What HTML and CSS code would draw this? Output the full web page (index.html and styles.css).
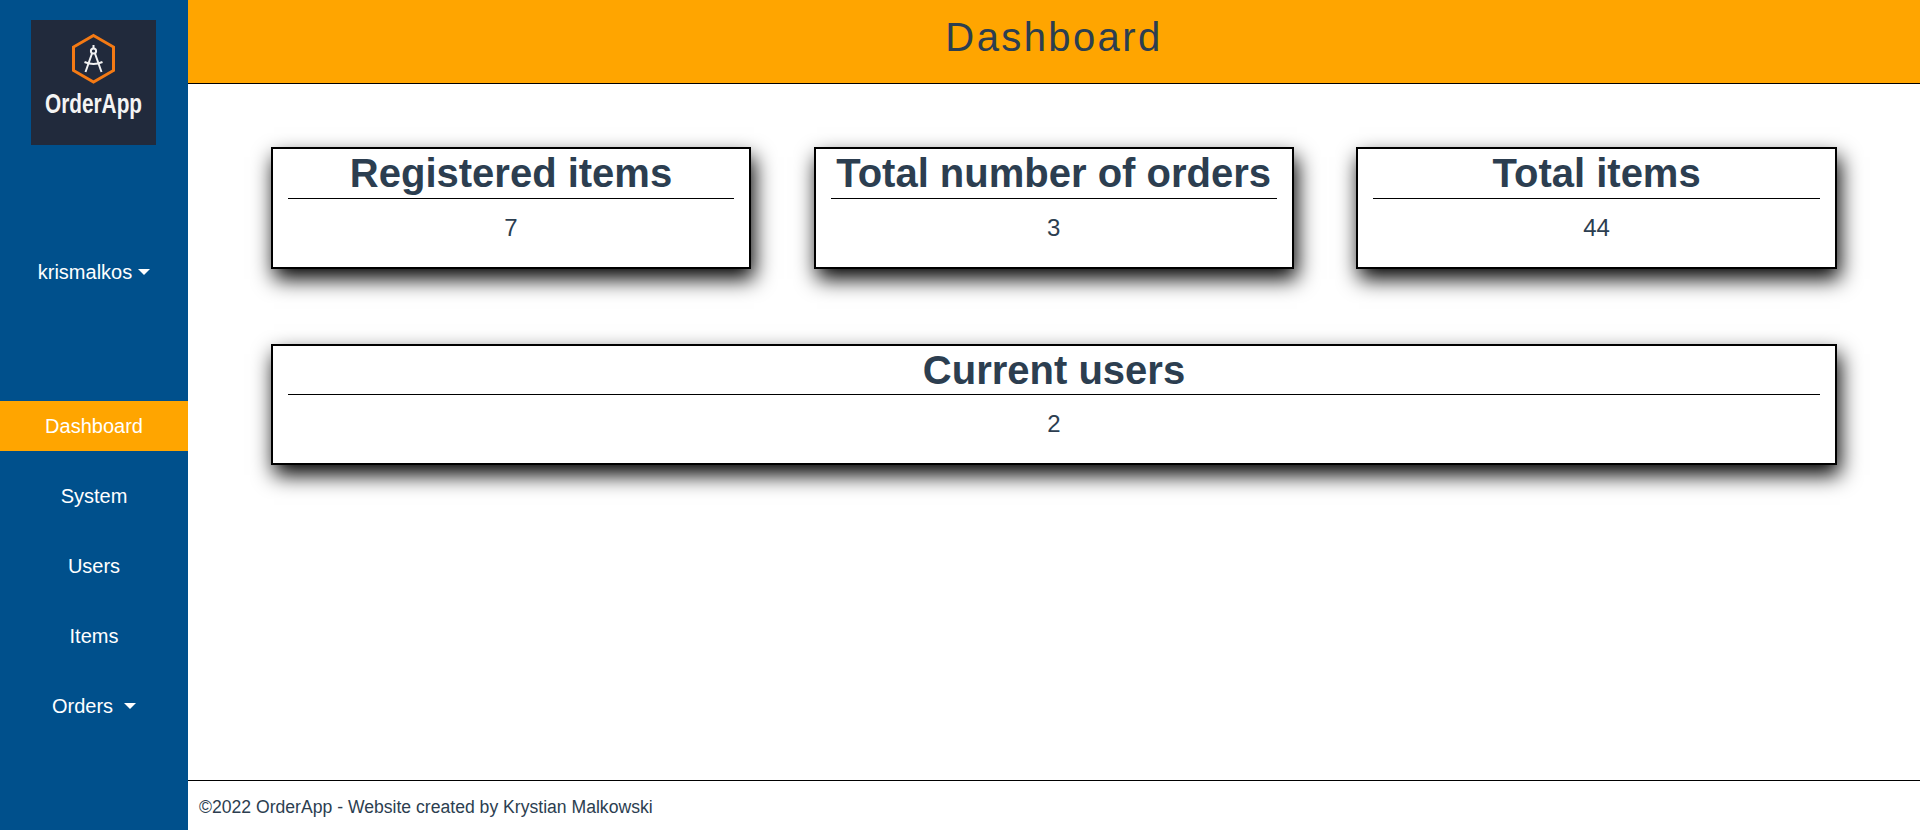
FILE: index.html
```html
<!DOCTYPE html>
<html lang="en">
<head>
<meta charset="utf-8">
<title>Dashboard</title>
<link rel="stylesheet" href="styles.css">
</head>
<body>
<aside class="sidebar">
  <div class="logo">
    <svg class="logo-svg" width="125" height="69" viewBox="0 0 125 69">
      <polygon class="hex" points="62.5,15.5 82.5,27 82.5,50.5 62.5,62 42.5,50.5 42.5,27"/>
      <g class="compass">
        <path d="M62.5 25V28.5"/>
        <circle cx="62.5" cy="31" r="2.6"/>
        <path d="M61 33.5L54.5 52M64 33.5L70.5 52"/>
        <path d="M53.5 42Q62.5 46 71.5 42"/>
      </g>
    </svg>
    <div class="logo-text">OrderApp</div>
  </div>
  <div class="user"><span>krismalkos</span><span class="caret"></span></div>
  <nav class="nav">
    <a class="nav-item active">Dashboard</a>
    <a class="nav-item">System</a>
    <a class="nav-item">Users</a>
    <a class="nav-item">Items</a>
    <a class="nav-item">Orders<span class="caret caret-wide"></span></a>
  </nav>
</aside>
<div class="main">
  <header class="topbar"><h1>Dashboard</h1></header>
  <main class="content">
    <section class="card"><h2>Registered items</h2><p>7</p></section>
    <section class="card"><h2>Total number of orders</h2><p>3</p></section>
    <section class="card"><h2>Total items</h2><p>44</p></section>
    <section class="card card-wide"><h2>Current users</h2><p>2</p></section>
  </main>
  <footer class="footer">©2022 OrderApp - Website created by Krystian Malkowski</footer>
</div>
</body>
</html>
```
FILE: styles.css
```css
* { box-sizing: border-box; }
html, body { height: 100%; }
body {
  margin: 0;
  display: flex;
  height: 830px;
  overflow: hidden;
  font-family: "Liberation Sans", Arial, sans-serif;
  color: #2c3e50;
  background: #fff;
}
.sidebar {
  width: 188px;
  flex: none;
  background: #00508c;
  color: #fff;
  display: flex;
  flex-direction: column;
  padding-top: 20px;
}
.logo {
  width: 125px;
  height: 125px;
  margin-left: 31px;
  background: #212a3c;
}
.logo-svg { display: block; }
.hex { fill: none; stroke: #f47a14; stroke-width: 3; }
.compass { fill: none; stroke: #f2f2f2; stroke-width: 2; }
.logo-text {
  font-size: 26px;
  line-height: 28px;
  font-weight: 700;
  color: #f4f4f4;
  text-align: center;
  transform: scale(0.8, 1.08);
}
.user {
  margin-top: 107px;
  height: 40px;
  display: flex;
  align-items: center;
  justify-content: center;
  font-size: 20px;
}
.caret {
  display: inline-block;
  width: 0;
  height: 0;
  margin-left: 6px;
  border-top: 6px solid #fff;
  border-left: 6px solid transparent;
  border-right: 6px solid transparent;
}
.caret-wide { margin-left: 11px; }
.nav {
  margin-top: 109px;
  display: flex;
  flex-direction: column;
  gap: 20px;
}
.nav-item {
  height: 50px;
  display: flex;
  align-items: center;
  justify-content: center;
  font-size: 20px;
  color: #fff;
}
.nav-item.active { background: #ffa500; }
.main {
  flex: 1;
  min-width: 0;
  display: flex;
  flex-direction: column;
}
.topbar {
  height: 84px;
  flex: none;
  background: #ffa500;
  border-bottom: 1px solid #000;
  display: flex;
  align-items: center;
  justify-content: center;
  padding-bottom: 8px;
}
.topbar h1 {
  margin: 0;
  font-size: 40px;
  font-weight: 400;
  letter-spacing: 2.4px;
  color: #2c3e50;
}
.content {
  flex: 1;
  padding: 63px 83px 0;
  display: grid;
  grid-template-columns: 480px 480px 1fr;
  grid-auto-rows: 121.6px;
  align-content: start;
  column-gap: 62.6px;
  row-gap: 75px;
}
.card {
  border: 2px solid #000;
  padding: 0 15px;
  background: #fff;
  text-align: center;
  box-shadow: 3px 10px 20px #000;
}
.card-wide { grid-column: 1 / -1; }
.card h2 {
  margin: 1px 0 0;
  font-size: 40px;
  line-height: 46px;
  height: 48.6px;
  border-bottom: 1px solid #000;
  font-weight: 700;
  color: #2c3e50;
}
.card p {
  margin: 15px 0 0;
  font-size: 24px;
  line-height: 28px;
}
.footer {
  height: 50px;
  flex: none;
  border-top: 1px solid #000;
  padding: 3px 0 0 11px;
  display: flex;
  align-items: center;
  font-size: 17.6px;
}
```
